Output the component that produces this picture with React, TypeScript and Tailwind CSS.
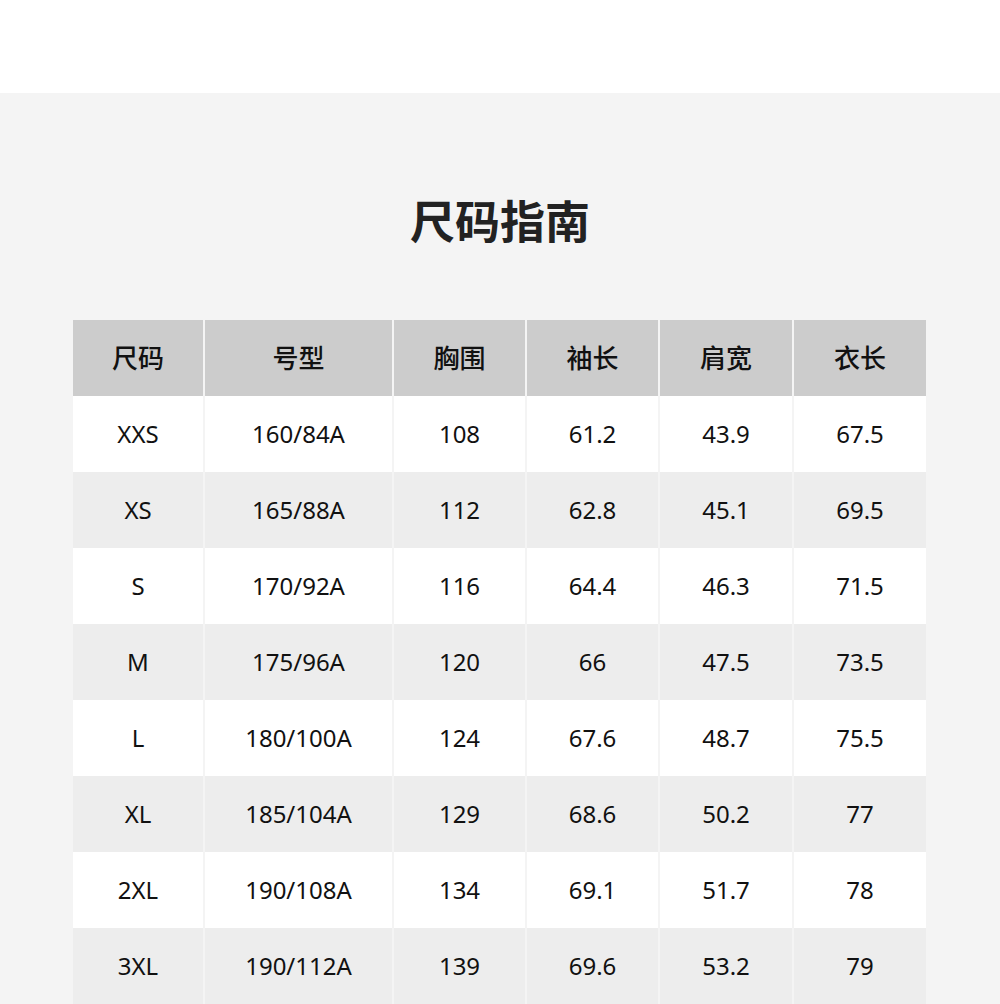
const headers = ["尺码", "号型", "胸围", "袖长", "肩宽", "衣长"];

const rows = [
  ["XXS", "160/84A", "108", "61.2", "43.9", "67.5"],
  ["XS", "165/88A", "112", "62.8", "45.1", "69.5"],
  ["S", "170/92A", "116", "64.4", "46.3", "71.5"],
  ["M", "175/96A", "120", "66", "47.5", "73.5"],
  ["L", "180/100A", "124", "67.6", "48.7", "75.5"],
  ["XL", "185/104A", "129", "68.6", "50.2", "77"],
  ["2XL", "190/108A", "134", "69.1", "51.7", "78"],
  ["3XL", "190/112A", "139", "69.6", "53.2", "79"],
];

export default function App() {
  return (
    <div className="w-[1000px] h-[1004px] overflow-hidden bg-white font-['Noto_Sans','Noto_Sans_CJK_SC',sans-serif] text-[#111]">
      <div className="h-[93px] bg-white" />
      <section className="bg-[#f4f4f4] pt-[98px] pb-10">
        <h1 className="text-center text-[45px] leading-[62px] font-bold text-[#222]">尺码指南</h1>
        <div className="mt-[67px] mx-[73px] grid grid-cols-[130px_187px_131px_131px_132px_132px] gap-x-[2px]">
          {headers.map((h) => (
            <div key={h} className="h-[76px] bg-[#cccccc] flex items-center justify-center text-[26px] font-medium">
              {h}
            </div>
          ))}
          {rows.map((r, i) =>
            r.map((c, j) => (
              <div
                key={i + "-" + j}
                className={
                  "h-[76px] flex items-center justify-center text-[24px] " +
                  (i % 2 === 0 ? "bg-white" : "bg-[#ededed]")
                }
              >
                {c}
              </div>
            ))
          )}
        </div>
      </section>
    </div>
  );
}
